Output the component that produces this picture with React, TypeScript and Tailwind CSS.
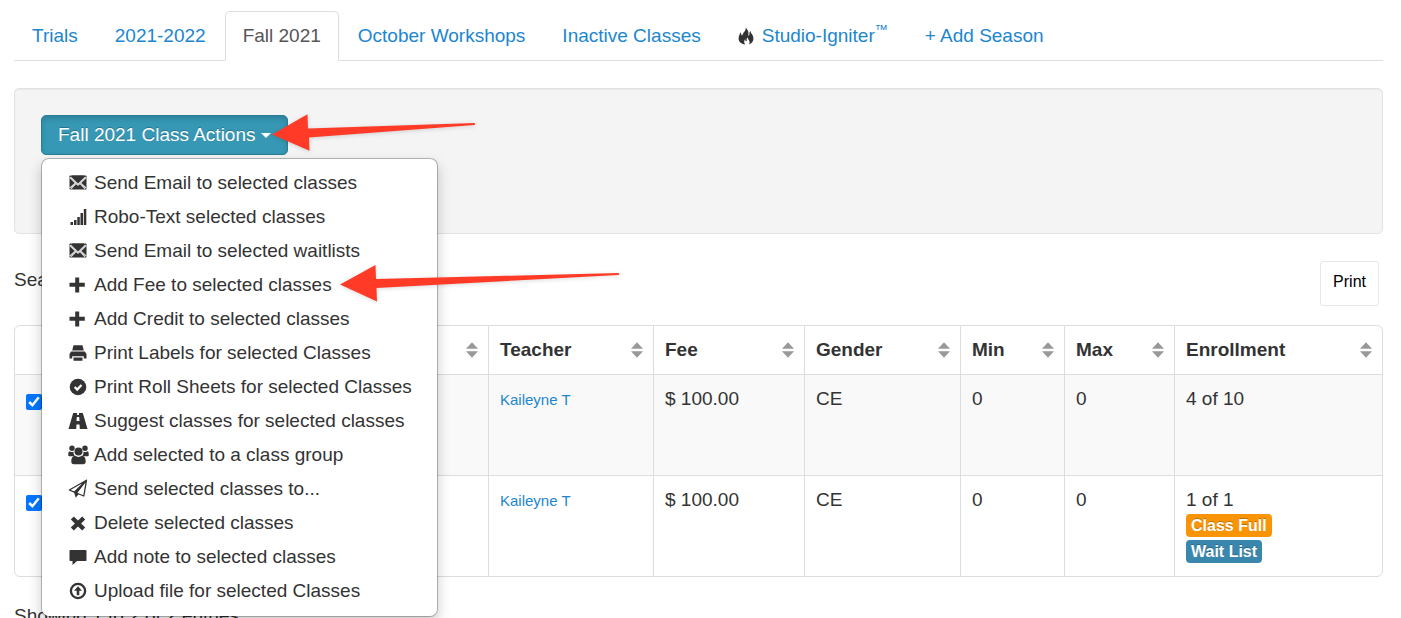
import type { ReactNode } from "react";

function Icon({ children, wide = false }: { children: ReactNode; wide?: boolean }) {
  return (
    <svg
      viewBox={wide ? "0 0 20 18" : "0 0 18 18"}
      className={wide ? "-ml-px h-[18px] w-5 shrink-0 fill-current" : "h-[18px] w-[18px] shrink-0 fill-current"}
      aria-hidden="true"
    >
      {children}
    </svg>
  );
}

const envelope = (
  <Icon>
    <rect x="0.5" y="1.500" width="17" height="14" rx="0.8" />
    <path
      d="M.8 3.500 6.500 9 .8 14M17.200 3.500 11.500 9 17.200 14M2 14.800 7 9.600 9 11.300 11 9.600 16 14.800M1.500 3 9 10.200 16.500 3"
      fill="none"
      stroke="#fff"
      strokeWidth="1.100"
      strokeOpacity="0.8"
    />
    <path d="M3 1.500h12L9 8.500z" />
  </Icon>
);

const signal = (
  <Icon>
    <rect x="1.500" y="14" width="2.500" height="3" />
    <rect x="5" y="12" width="2.500" height="5" />
    <rect x="8.300" y="9" width="2.500" height="8" />
    <rect x="11.500" y="5" width="2.500" height="12" />
    <rect x="14.800" y="1" width="2.500" height="16" />
  </Icon>
);

const plus = (
  <Icon>
    <path d="M6.200 1.500h4v5.200h5.600v4h-5.600V16.500h-4v-5.800H0.500v-4h5.700z" />
  </Icon>
);

const printer = (
  <Icon>
    <path d="M4.500 1.200h9l1.300 5.300H3.200zM2.200 7.500h13.600l1.700 2.500v4.500h-2.700v-2.300H3.200v2.300H.5V10zM4.500 13.500h9v3.300h-9z" />
  </Icon>
);

const check = (
  <Icon>
    <circle cx="9" cy="9" r="8.300" />
    <path d="m5.700 9 2.500 2.500 4.300-4.500" fill="none" stroke="#fff" strokeWidth="2.300" />
  </Icon>
);

const road = (
  <Icon wide>
    <path
      d="M5.200 1h3.900l-.2 2h2.200l-.2-2h3.900L19.500 17h-7.700l-.3-4.500h-3L8.200 17H.5zM8.800 5l-.3 4h3l-.3-4z"
      fillRule="evenodd"
    />
  </Icon>
);

const group = (
  <svg viewBox="0 0 21 20" className="-ml-px h-5 w-[21px] shrink-0 fill-current" aria-hidden="true">
    <circle cx="4" cy="3.300" r="2.700" />
    <circle cx="17" cy="3.300" r="2.700" />
    <circle cx="10.500" cy="6.500" r="4" />
    <path d="M.3 10.500V8.300C.3 7 1 6.500 2.100 6.500c1 .7 2.500.8 3.500.2-.2 1.500.1 2.900 1 4L4 11.300H1.300c-.6 0-1-.3-1-.8zM20.700 10.500V8.300c0-1.300-.7-1.800-1.800-1.800-1 .7-2.500.8-3.500.2.2 1.500-.1 2.900-1 4l2.600.6h2.700c.6 0 1-.3 1-.8zM7 10.800c2 1.500 5 1.500 7 0 2.600 0 3.700 2.400 3.700 6 0 1.500-.9 2.500-2.500 2.500H5.800c-1.600 0-2.500-1-2.500-2.500 0-3.600 1.100-6 3.700-6z" />
  </svg>
);

const plane = (
  <svg viewBox="0 0 20 20" className="-ml-px h-5 w-5 shrink-0 fill-current" aria-hidden="true">
    <path
      d="M18.500 1.200 1.300 11l5 2.200L18.500 1.200 8.300 14l7.500 3z"
      fill="none"
      stroke="currentColor"
      strokeWidth="1.300"
      strokeLinejoin="round"
    />
    <path d="M17.500 2.500 6 13.200l1.800 5.500 2.900-3.600-1.800-1z" />
  </svg>
);

const remove = (
  <Icon>
    <path d="M4.800 2.500 9 6.600l4.200-4.100 3 3L12.100 9.500l4.100 4-3 3L9 12.400l-4.200 4.100-3-3 4.100-4-4.100-4z" />
  </Icon>
);

const comment = (
  <Icon>
    <path d="M1.300 2h15.400c.5 0 .8.300.8.800v9.400c0 .5-.3.800-.8.800H8l-4.500 4V13H1.300c-.5 0-.8-.3-.8-.8V2.800c0-.5.300-.8.800-.8z" />
  </Icon>
);

const upload = (
  <Icon>
    <circle cx="9" cy="9" r="7.100" fill="none" stroke="currentColor" strokeWidth="2.300" />
    <path d="m9 4.300 4 4.500h-2.700v4.500H7.700V8.800H5z" />
  </Icon>
);

const actions: { icon: ReactNode; label: string; arrow?: boolean }[] = [
  { icon: envelope, label: "Send Email to selected classes" },
  { icon: signal, label: "Robo-Text selected classes" },
  { icon: envelope, label: "Send Email to selected waitlists" },
  { icon: plus, label: "Add Fee to selected classes", arrow: true },
  { icon: plus, label: "Add Credit to selected classes" },
  { icon: printer, label: "Print Labels for selected Classes" },
  { icon: check, label: "Print Roll Sheets for selected Classes" },
  { icon: road, label: "Suggest classes for selected classes" },
  { icon: group, label: "Add selected to a class group" },
  { icon: plane, label: "Send selected classes to..." },
  { icon: remove, label: "Delete selected classes" },
  { icon: comment, label: "Add note to selected classes" },
  { icon: upload, label: "Upload file for selected Classes" },
];

function Tab({ children, active = false }: { children: ReactNode; active?: boolean }) {
  return (
    <li className="-mb-px">
      <a
        href="#"
        aria-current={active ? "page" : undefined}
        className={
          active
            ? "flex h-[50px] items-center rounded-t-[5px] border border-b-white border-[#ddd] bg-white px-[17px] text-[#555]"
            : "flex h-[50px] items-center border border-transparent px-[17px] text-[#1c86cf]"
        }
      >
        {children}
      </a>
    </li>
  );
}

function Flame() {
  return (
    <svg viewBox="0 0 16 18" className="mr-2 h-[18px] w-4 fill-[#333]" aria-hidden="true">
      <path d="M7.800.3C8.900 2.400 10.600 4 10.500 6.500c0 1-.3 1.600-.3 2.300.9-.3 1.400-1 1.200-2.200-.1-1 .4-2 1.300-2.600-.1 1.900 1.200 2.700 2 4.400 1.700 3.500.3 7.600-3.600 9 .8-1.500.6-3-.3-4.300-.7-1-1-1.700-.9-2.800-1 .8-1.500 1.700-1.200 2.800.3 1.200-.5 1.500-1 1-.5-.6-.6-1.300-.4-2.200-1.400 1.600-1.500 3.700-.2 5.500C3 17 .6 14.500.6 11.400.6 9 1.900 7.900 2.200 5.600c1 .7 1.400 1.700 1.300 3 .6-.1 1.100-.6 1.300-1.400C5.300 5.200 8.300 3.800 7.800.3z" />
    </svg>
  );
}

function Arrow({ length, className }: { length: "short" | "long"; className: string }) {
  return length === "short" ? (
    <svg viewBox="0 0 204 38" className={`${className} h-[38px] w-[204px] fill-[#ff3b28] drop-shadow-sm`} aria-hidden="true">
      <path d="M0 20.500 35.500.2 36 14.500 202.500 9q1.500 1 0 2L37 23.500l.5 13.300z" />
    </svg>
  ) : (
    <svg viewBox="0 0 280 38" className={`${className} h-[38px] w-[280px] fill-[#ff3b28] drop-shadow-sm`} aria-hidden="true">
      <path d="M0 20.500 35.500 1 36 15 278.500 9q1.500 1 0 2L36.500 24l.5 13.500z" />
    </svg>
  );
}

function Sort() {
  return (
    <svg viewBox="0 0 12 16" className="h-4 w-3 shrink-0 fill-[#999]" aria-hidden="true">
      <path d="M6 .3 12 6.800H0zM0 9.200h12L6 15.700z" />
    </svg>
  );
}

function Head({ label }: { label?: string }) {
  return (
    <th scope="col" className="h-12 border-l border-[#ddd] py-0 pr-[10px] pl-[11px] text-left font-bold">
      <div className="flex items-center justify-between">
        <span>{label}</span>
        <Sort />
      </div>
    </th>
  );
}

function Cell({ children }: { children?: ReactNode }) {
  return <td className="border-t border-l border-[#ddd] px-[11px] py-[11px] align-top">{children}</td>;
}

function Row({ id, striped = false, children }: { id: string; striped?: boolean; children: ReactNode }) {
  return (
    <tr className={striped ? "h-[101px] bg-[#f9f9f9]" : "h-[101px]"}>
      <td className="border-t border-[#ddd] py-[19px] pl-[11px] align-top">
        <input id={id} type="checkbox" defaultChecked aria-label="Select class" className="block h-4 w-4 accent-[#0075ff]" />
      </td>
      <Cell />
      <Cell>
        <a href="#" className="text-[15px] text-[#1c86cf]">
          Kaileyne T
        </a>
      </Cell>
      <Cell>$ 100.00</Cell>
      <Cell>CE</Cell>
      <Cell>0</Cell>
      <Cell>0</Cell>
      <Cell>{children}</Cell>
    </tr>
  );
}

export default function App() {
  return (
    <main className="bg-white pt-[11px] pr-[18px] pl-[14px] font-['Liberation_Sans',Arial,sans-serif] text-[19px] leading-[26px] text-[#333]">
      <nav>
        <ul className="flex gap-px border-b border-[#ddd]">
          <Tab>Trials</Tab>
          <Tab>2021-2022</Tab>
          <Tab active>Fall 2021</Tab>
          <Tab>October Workshops</Tab>
          <Tab>Inactive Classes</Tab>
          <Tab>
            <Flame />
            Studio-Igniter
            <span className="mb-3 text-[13px]">™</span>
          </Tab>
          <Tab>+ Add Season</Tab>
        </ul>
      </nav>

      <section className="mt-[27px] min-h-[146px] rounded-[5px] border border-[#e3e3e3] bg-[#f4f4f4] px-[26px] py-[26px] shadow-[inset_0_1px_1px_rgba(0,0,0,0.05)]">
        <div className="relative inline-block">
          <button
            type="button"
            aria-haspopup="menu"
            aria-expanded="true"
            className="flex h-10 items-center rounded-[5px] border border-[#2b7d94] bg-[#3698b5] px-4 text-white shadow-[inset_0_3px_5px_rgba(0,0,0,0.15)] [text-shadow:0_-1px_0_rgba(0,0,0,0.25)]"
          >
            Fall 2021 Class Actions
            <svg viewBox="0 0 10 5" className="ml-[5px] h-[5px] w-[10px] fill-white" aria-hidden="true">
              <path d="M0 0h10L5 5z" />
            </svg>
          </button>
          <Arrow length="short" className="pointer-events-none absolute -top-px left-[231px] z-20 max-w-none" />

          <ul
            role="menu"
            className="absolute top-full left-0 z-10 mt-[3px] w-[397px] rounded-lg border border-black/25 bg-white bg-clip-padding pt-[7px] pb-2 shadow-[0_6px_13px_rgba(0,0,0,0.2)]"
          >
            {actions.map((action) => (
              <li key={action.label} role="none">
                <a href="#" role="menuitem" className="relative flex h-[34px] items-center pl-[27px] whitespace-nowrap">
                  <span className="flex w-[25px] shrink-0 items-center">{action.icon}</span>
                  {action.label}
                  {action.arrow && (
                    <Arrow length="long" className="pointer-events-none absolute -top-1 left-[298px] max-w-none" />
                  )}
                </a>
              </li>
            ))}
          </ul>
        </div>
      </section>

      <div className="flex items-start justify-between pt-[27px] pr-1">
        <label className="flex items-center gap-2 pt-[6px]">
          Search:
          <input type="search" className="h-[26px] w-60 rounded border border-[#ccc] px-2" />
        </label>
        <button type="button" className="h-[45px] rounded-[3px] border border-[#e7e7e7] px-3 pb-[3px] text-[16px] text-black">
          Print
        </button>
      </div>

      <div className="mt-[19px] overflow-hidden rounded-md border border-[#ddd]">
        <table className="w-full table-fixed border-separate border-spacing-0">
          <colgroup>
            <col className="w-[46px]" />
            <col />
            <col className="w-[165px]" />
            <col className="w-[151px]" />
            <col className="w-[156px]" />
            <col className="w-[104px]" />
            <col className="w-[110px]" />
            <col className="w-[208px]" />
          </colgroup>
          <thead>
            <tr>
              <td />
              <Head />
              <Head label="Teacher" />
              <Head label="Fee" />
              <Head label="Gender" />
              <Head label="Min" />
              <Head label="Max" />
              <Head label="Enrollment" />
            </tr>
          </thead>
          <tbody>
            <Row id="class-1" striped>
              4 of 10
            </Row>
            <Row id="class-2">
              1 of 1
              <div className="flex flex-col items-start gap-[3px] pt-px text-[16px] leading-[23px] font-bold text-white [text-shadow:0_-1px_0_rgba(0,0,0,0.25)]">
                <span className="rounded-[4px] bg-[#f89406] px-[5px]">Class Full</span>
                <span className="rounded-[4px] bg-[#3a87ad] px-[5px]">Wait List</span>
              </div>
            </Row>
          </tbody>
        </table>
      </div>

      <p className="mt-[26px]">Showing 1 to 2 of 2 entries</p>
    </main>
  );
}
